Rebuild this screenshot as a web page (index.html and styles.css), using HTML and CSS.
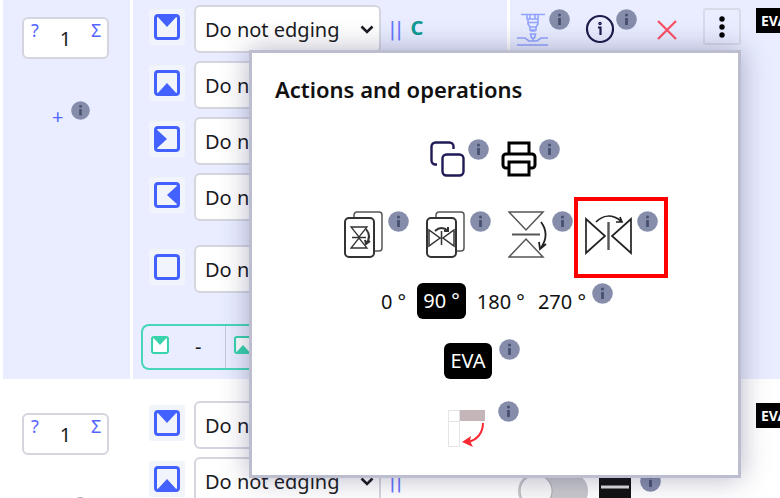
FILE: index.html
```html
<!DOCTYPE html>
<html lang="en">
<head>
<meta charset="utf-8">
<title>Actions and operations</title>
<link rel="stylesheet" href="styles.css">
</head>
<body>
<svg class="sprite" aria-hidden="true">
  <symbol id="edge-top" viewBox="0 0 26 26"><rect x="1.5" y="1.5" width="23" height="23" rx="2.5" fill="none" stroke="currentColor" stroke-width="3"/><path d="M2 1h22L13 13z" fill="currentColor"/></symbol>
  <symbol id="edge-bottom" viewBox="0 0 26 26"><rect x="1.5" y="1.5" width="23" height="23" rx="2.5" fill="none" stroke="currentColor" stroke-width="3"/><path d="M2 25h22L13 13z" fill="currentColor"/></symbol>
  <symbol id="edge-left" viewBox="0 0 26 26"><rect x="1.5" y="1.5" width="23" height="23" rx="2.5" fill="none" stroke="currentColor" stroke-width="3"/><path d="M1 2v22L13 13z" fill="currentColor"/></symbol>
  <symbol id="edge-right" viewBox="0 0 26 26"><rect x="1.5" y="1.5" width="23" height="23" rx="2.5" fill="none" stroke="currentColor" stroke-width="3"/><path d="M25 2v22L13 13z" fill="currentColor"/></symbol>
  <symbol id="edge-none" viewBox="0 0 26 26"><rect x="1.5" y="1.5" width="23" height="23" rx="2.5" fill="none" stroke="currentColor" stroke-width="3"/></symbol>
  <symbol id="chevron" viewBox="0 0 14 9"><path d="M1.5 1.5L7 7l5.500-5.500" fill="none" stroke="currentColor" stroke-width="2.600"/></symbol>
  <symbol id="info" viewBox="0 0 21 21"><circle cx="10.500" cy="10.500" r="10.300" fill="#858dab"/><circle cx="10.500" cy="6" r="1.500" fill="#48506f"/><path d="M10.500 9v7" stroke="#48506f" stroke-width="2.800"/></symbol>
</svg>

<main class="sheet">
  <section class="row row-active">
    <div class="cell count-cell">
      <div class="count">
        <button type="button" aria-label="Help">?</button>
        <input type="text" value="1" aria-label="Quantity">
        <button type="button" aria-label="Sum">Σ</button>
      </div>
      <div class="add">
        <button type="button">+</button>
        <svg class="info small"><use href="#info"/></svg>
      </div>
    </div>
    <div class="cell edges">
      <div class="edge"><span class="tile"><svg><use href="#edge-top"/></svg></span><span class="pick"><select aria-label="Top edge"><option>Do not edging</option></select><svg><use href="#chevron"/></svg></span><span class="bars">||</span><b class="mark">C</b></div>
      <div class="edge"><span class="tile"><svg><use href="#edge-bottom"/></svg></span><span class="pick"><select aria-label="Bottom edge"><option>Do not edging</option></select><svg><use href="#chevron"/></svg></span></div>
      <div class="edge"><span class="tile"><svg><use href="#edge-left"/></svg></span><span class="pick"><select aria-label="Left edge"><option>Do not edging</option></select><svg><use href="#chevron"/></svg></span></div>
      <div class="edge"><span class="tile"><svg><use href="#edge-right"/></svg></span><span class="pick"><select aria-label="Right edge"><option>Do not edging</option></select><svg><use href="#chevron"/></svg></span></div>
      <div class="edge all"><span class="tile"><svg><use href="#edge-none"/></svg></span><span class="pick"><select aria-label="All edges"><option>Do not edging</option></select><svg><use href="#chevron"/></svg></span></div>
      <div class="summary">
        <div><svg><use href="#edge-top"/></svg><span>-</span></div>
        <div><svg><use href="#edge-bottom"/></svg></div>
      </div>
    </div>
    <div class="cell tools">
      <svg class="drill" viewBox="0 0 33 34" fill="none" stroke="#93a4ff" stroke-width="1.600"><path d="M5 1.500h24M11 1.500V6h11V1.500M14 2v4M19 2v4M12 6v5l2 3h6l2-3V6M12 9.500h10M14 14v3h6v-3M14.500 18h5M14.500 21h5l-1 4h-3zM17 25v3M1 25h8l4 3h8l4-3h7M1 32h31"/></svg>
      <svg class="info"><use href="#info"/></svg>
      <button type="button" class="about" aria-label="Details"><svg viewBox="0 0 30 30" fill="none" stroke="#1c1a4a" stroke-width="2.200"><circle cx="15" cy="15" r="13"/><path d="M13 13.500h2.500V21"/><circle cx="15" cy="9.500" r=".7"/></svg></button>
      <svg class="info"><use href="#info"/></svg>
      <button type="button" class="remove" aria-label="Remove"><svg viewBox="0 0 20 20" stroke="#fa4f63" stroke-width="2.200"><path d="M1 1l18 18M19 1L1 19"/></svg></button>
      <button type="button" class="more" aria-label="More"><svg viewBox="0 0 6 22"><circle cx="3" cy="3" r="2.700"/><circle cx="3" cy="11" r="2.700"/><circle cx="3" cy="19" r="2.700"/></svg></button>
      <span class="tag">EVA</span>
    </div>
  </section>

  <section class="row row-next">
    <div class="cell count-cell">
      <div class="count">
        <button type="button" aria-label="Help">?</button>
        <input type="text" value="1" aria-label="Quantity">
        <button type="button" aria-label="Sum">Σ</button>
      </div>
      <div class="add">
        <svg class="info small"><use href="#info"/></svg>
      </div>
    </div>
    <div class="cell edges">
      <div class="edge"><span class="tile"><svg><use href="#edge-top"/></svg></span><span class="pick"><select aria-label="Top edge"><option>Do not edging</option></select><svg><use href="#chevron"/></svg></span></div>
      <div class="edge"><span class="tile"><svg><use href="#edge-bottom"/></svg></span><span class="pick"><select aria-label="Bottom edge"><option>Do not edging</option></select><svg><use href="#chevron"/></svg></span><span class="bars">||</span></div>
    </div>
    <div class="cell options">
      <span class="tag">EVA</span>
      <div class="option-line">
        <input type="checkbox" class="toggle" aria-label="Enable">
        <svg class="strip" viewBox="0 0 32 40"><path fill="#111" d="M0 0h32v40H0z"/><path stroke="#ddd" stroke-width="3" d="M2 12h28"/></svg>
        <svg class="info"><use href="#info"/></svg>
      </div>
    </div>
  </section>
</main>

<div class="popup" role="dialog" aria-labelledby="popup-title">
  <h2 id="popup-title">Actions and operations</h2>
  <div class="line copy-line">
    <button type="button" class="action" aria-label="Copy">
      <svg class="i36" viewBox="0 0 36 36" fill="none" stroke="#1f1a55" stroke-width="2.400"><rect x="12.500" y="13.500" width="21" height="21" rx="4"/><path d="M7 23.500H5.500a4 4 0 0 1-4-4v-14a4 4 0 0 1 4-4h14a4 4 0 0 1 4 4V8"/></svg>
      <svg class="info"><use href="#info"/></svg>
    </button>
    <button type="button" class="action" aria-label="Print">
      <svg class="i36" viewBox="0 0 36 36" fill="none" stroke="#000" stroke-width="3"><path d="M8 13V2h20v11M8 27H5a3 3 0 0 1-3-3v-8a3 3 0 0 1 3-3h26a3 3 0 0 1 3 3v8a3 3 0 0 1-3 3h-3M8 21h20v13H8z"/></svg>
      <svg class="info"><use href="#info"/></svg>
    </button>
  </div>
  <div class="line flip-line">
    <button type="button" class="action" aria-label="Copy and flip vertically">
      <svg class="card" viewBox="0 0 40 48" fill="none" stroke="#333"><path stroke-width="1.500" stroke="#555" d="M10 6V4a3 3 0 0 1 3-3h22a3 3 0 0 1 3 3v33a3 3 0 0 1-3 3h-4"/><rect x="1" y="7" width="29" height="39" rx="4" stroke-width="2"/><path stroke-width="1.300" d="M7 16h16L15 26zM7 37h16L15 27zM8 26.500h14"/><path stroke-width="2" d="M22 18c4 5 4 10 0 15M26 30l-4 3-1-4"/></svg>
      <svg class="info"><use href="#info"/></svg>
    </button>
    <button type="button" class="action" aria-label="Copy and flip horizontally">
      <svg class="card" viewBox="0 0 40 48" fill="none" stroke="#333"><path stroke-width="1.500" stroke="#555" d="M10 6V4a3 3 0 0 1 3-3h22a3 3 0 0 1 3 3v33a3 3 0 0 1-3 3h-4"/><rect x="1" y="7" width="29" height="39" rx="4" stroke-width="2"/><path stroke-width="1.500" d="M3 19v16l11-8zM28 19v16l-11-8zM15.500 20v14"/><path stroke-width="2" d="M9 20c4-4 9-4 13 0M22 16v4h-4"/></svg>
      <svg class="info"><use href="#info"/></svg>
    </button>
    <button type="button" class="action" aria-label="Flip vertically">
      <svg class="card" viewBox="0 0 40 48" fill="none" stroke="#555" stroke-width="1.500"><path d="M1 1h34L18 19zM1 46h34L18 28z"/><path d="M4 23.500h28" stroke-width="2"/><path stroke="#222" stroke-width="1.800" d="M33 11c6 8 6 17 0 26M38 33l-6 5-1-7"/></svg>
      <svg class="info"><use href="#info"/></svg>
    </button>
    <button type="button" class="action marked" aria-label="Flip horizontally">
      <svg class="wide" viewBox="0 0 49 48" fill="none" stroke="#222" stroke-width="1.700"><path d="M2 8v34l19-17zM47 8v34L28 25z"/><path d="M24.500 11v28" stroke="#555" stroke-width="2.400"/><path d="M12 11C19 4 28 3 37 10M32 11h6l-2-5"/></svg>
      <svg class="info"><use href="#info"/></svg>
    </button>
  </div>
  <div class="line angle-line">
    <button type="button">0 °</button>
    <button type="button" class="dark">90 °</button>
    <button type="button">180 °</button>
    <button type="button">270 °</button>
    <svg class="info"><use href="#info"/></svg>
  </div>
  <div class="line eva-line">
    <button type="button" class="dark">EVA</button>
    <svg class="info"><use href="#info"/></svg>
  </div>
  <div class="line turn-line">
    <button type="button" class="action" aria-label="Rotate part">
      <svg class="i38" viewBox="0 0 38 38" fill="none"><path fill="#c4b5b8" d="M11 0h26v11H11z"/><path stroke="#e5e3e5" d="M.5.5h11v36H.5zM.5 11.500h11"/><path stroke="#fa2a32" stroke-width="2" d="M35 13c0 10-6 17-15 19"/><path fill="#fa2a32" d="M14 32l9-6-1 5 3 6z"/></svg>
      <svg class="info"><use href="#info"/></svg>
    </button>
  </div>
</div>
</body>
</html>
```

FILE: styles.css
```css
* { box-sizing: border-box; }

body {
  margin: 0;
  overflow: hidden;
  background: #fff;
  color: #1b1b22;
  font: 20px/28px "Noto Sans", "Open Sans", sans-serif;
}

button, input, select { font: inherit; color: inherit; }
button { padding: 0; border: 0; background: none; }
svg { display: block; flex: none; }

.sprite { position: absolute; width: 0; height: 0; }
.info { width: 21px; height: 21px; }
.info.small { width: 19px; height: 19px; }

.sheet {
  display: grid;
  gap: 3px;
  height: 100vh;
  padding-left: 3px;
  overflow: hidden;
}

.row {
  display: grid;
  grid-template-columns: 127px 374px 1fr;
  gap: 3px;
}

.row-active .cell { background: #e9edff; }
.row-active .edges { padding-top: 5px; padding-bottom: 9px; }
.row-next .edges { padding-top: 19px; }

.count-cell { padding: 17px 21px 0 19px; }
.row-next .count-cell { padding-top: 31px; }

.count {
  display: flex;
  height: 42px;
  padding: 0 6px;
  border: 2px solid #d5d5e0;
  border-radius: 6px;
  background: #fff;
}

.count button {
  align-self: flex-start;
  width: 10px;
  color: #5566ff;
  font-size: 18px;
  line-height: 22px;
}

.count input {
  flex: 1;
  min-width: 0;
  padding: 2px 0 0;
  border: 0;
  background: none;
  text-align: center;
}

.add {
  display: flex;
  gap: 8px;
  padding: 42px 0 0 30px;
}

.row-next .add { padding-left: 49px; }

.add button {
  margin-top: 2px;
  color: #5566ff;
}

.edges { padding-left: 8px; }

.edge {
  display: flex;
  align-items: flex-start;
  height: 47px;
  margin-bottom: 9px;
  padding-left: 8px;
}

.edge.all { margin-top: 25px; margin-bottom: 32px; }

.tile {
  margin: 4px 9px 0 0;
  padding: 5px;
  border-radius: 3px;
  background: #f2f4fc;
  color: #4261ff;
}

.tile svg { width: 26px; height: 26px; }

.pick {
  position: relative;
  width: 187px;
}

.pick select {
  appearance: none;
  width: 100%;
  height: 48px;
  padding: 2px 0 0 9px;
  border: 2px solid #d5d5e0;
  border-radius: 6px;
  background: #fff;
}

.pick svg {
  position: absolute;
  top: 20px;
  right: 7px;
  width: 14px;
  height: 9px;
}

.bars {
  padding: 10px 0 0 8px;
  color: #6875ff;
  font-family: "DejaVu Sans", sans-serif;
}

.mark {
  padding: 9px 0 0 8px;
  color: #109a94;
}

.summary {
  display: flex;
  height: 46px;
  border: 2px solid #48d6b8;
  border-right: 0;
  border-radius: 8px 0 0 8px;
}

.summary div {
  display: flex;
  align-items: center;
  gap: 26px;
  width: 83px;
  padding-left: 8px;
  border-right: 1px solid #c4c8d8;
}

.summary svg {
  width: 18px;
  height: 18px;
  margin-bottom: 4px;
  background: #fff;
  color: #38d2ad;
}

.tools {
  display: flex;
  align-items: flex-start;
  padding: 8px 0 0 6px;
  overflow: hidden;
}

.drill { width: 33px; height: 34px; margin: 5px 0 0; }
.tools .info { margin-top: 1px; }
.about { margin: 6px 1px 0 15px; }
.about svg { width: 30px; height: 30px; }
.remove { margin: 12px 26px 0 20px; }
.remove svg { width: 20px; height: 20px; }

.more {
  display: grid;
  flex: none;
  place-items: center;
  width: 38px;
  height: 37px;
  border: 2px solid #d8dbe9;
  border-radius: 3px;
}

.more svg { width: 6px; height: 22px; }

.tag {
  flex: none;
  width: 50px;
  height: 25px;
  margin-left: 15px;
  padding-left: 5px;
  background: #000;
  color: #fff;
  font-size: 14px;
  font-weight: 700;
  line-height: 25px;
}

.options {
  display: flex;
  flex-direction: column;
  padding-top: 21px;
  overflow: hidden;
}

.options .tag { margin-left: 246px; }

.option-line {
  display: flex;
  align-items: flex-start;
  padding: 43px 0 0 8px;
}

.toggle {
  appearance: none;
  width: 70px;
  height: 36px;
  margin: 2px 11px 0 0;
  border: 2px solid #c6c6ca;
  border-radius: 18px;
  background: radial-gradient(circle at 16px 16px, #f8f8f8 15px, #aaa 16px, #c8c8cc 17px);
}

.strip { width: 32px; height: 40px; margin: 4px 9px 0 0; }

.popup {
  position: absolute;
  top: 50px;
  left: 249px;
  width: 492px;
  padding: 21px 24px 27px 23px;
  border: 3px solid #bdbdd0;
  background: #fff;
  box-shadow: 0 0 26px rgb(40 40 90 / 35%);
  color: #111;
}

.popup h2 {
  margin: 0;
  font-size: 22px;
  font-weight: 600;
  line-height: 30px;
}

.line {
  display: flex;
  align-items: flex-start;
  justify-content: center;
}

.action {
  position: relative;
  display: flex;
  align-items: flex-start;
}

.copy-line { gap: 12px; padding-top: 35px; }
.copy-line .action { gap: 2px; }
.i36 { width: 36px; height: 36px; margin-top: 2px; }

.flip-line { gap: 17px; padding: 34px 0 0 13px; }
.flip-line .action { gap: 4px; }
.card { width: 40px; height: 48px; }
.wide { width: 49px; height: 48px; }

.flip-line .marked { margin-left: -6px; }

.marked::after {
  content: "";
  position: absolute;
  inset: -14px -10px -19px;
  border: 4px solid #f00;
}

.angle-line { gap: 9px; padding: 24px 0 0 3px; }
.angle-line button { height: 36px; padding: 1px 2px 0; }
.angle-line .info { margin-left: -5px; }

.popup .dark {
  height: 36px;
  padding: 0 6px;
  border-radius: 6px;
  background: #000;
  color: #fff;
}

.eva-line { gap: 7px; padding: 20px 25px 0 0; }
.eva-line .dark { margin-top: 4px; }

.turn-line { padding: 22px 22px 0 0; }
.turn-line .action { gap: 12px; }
.i38 { width: 38px; height: 38px; margin-top: 9px; }
```
